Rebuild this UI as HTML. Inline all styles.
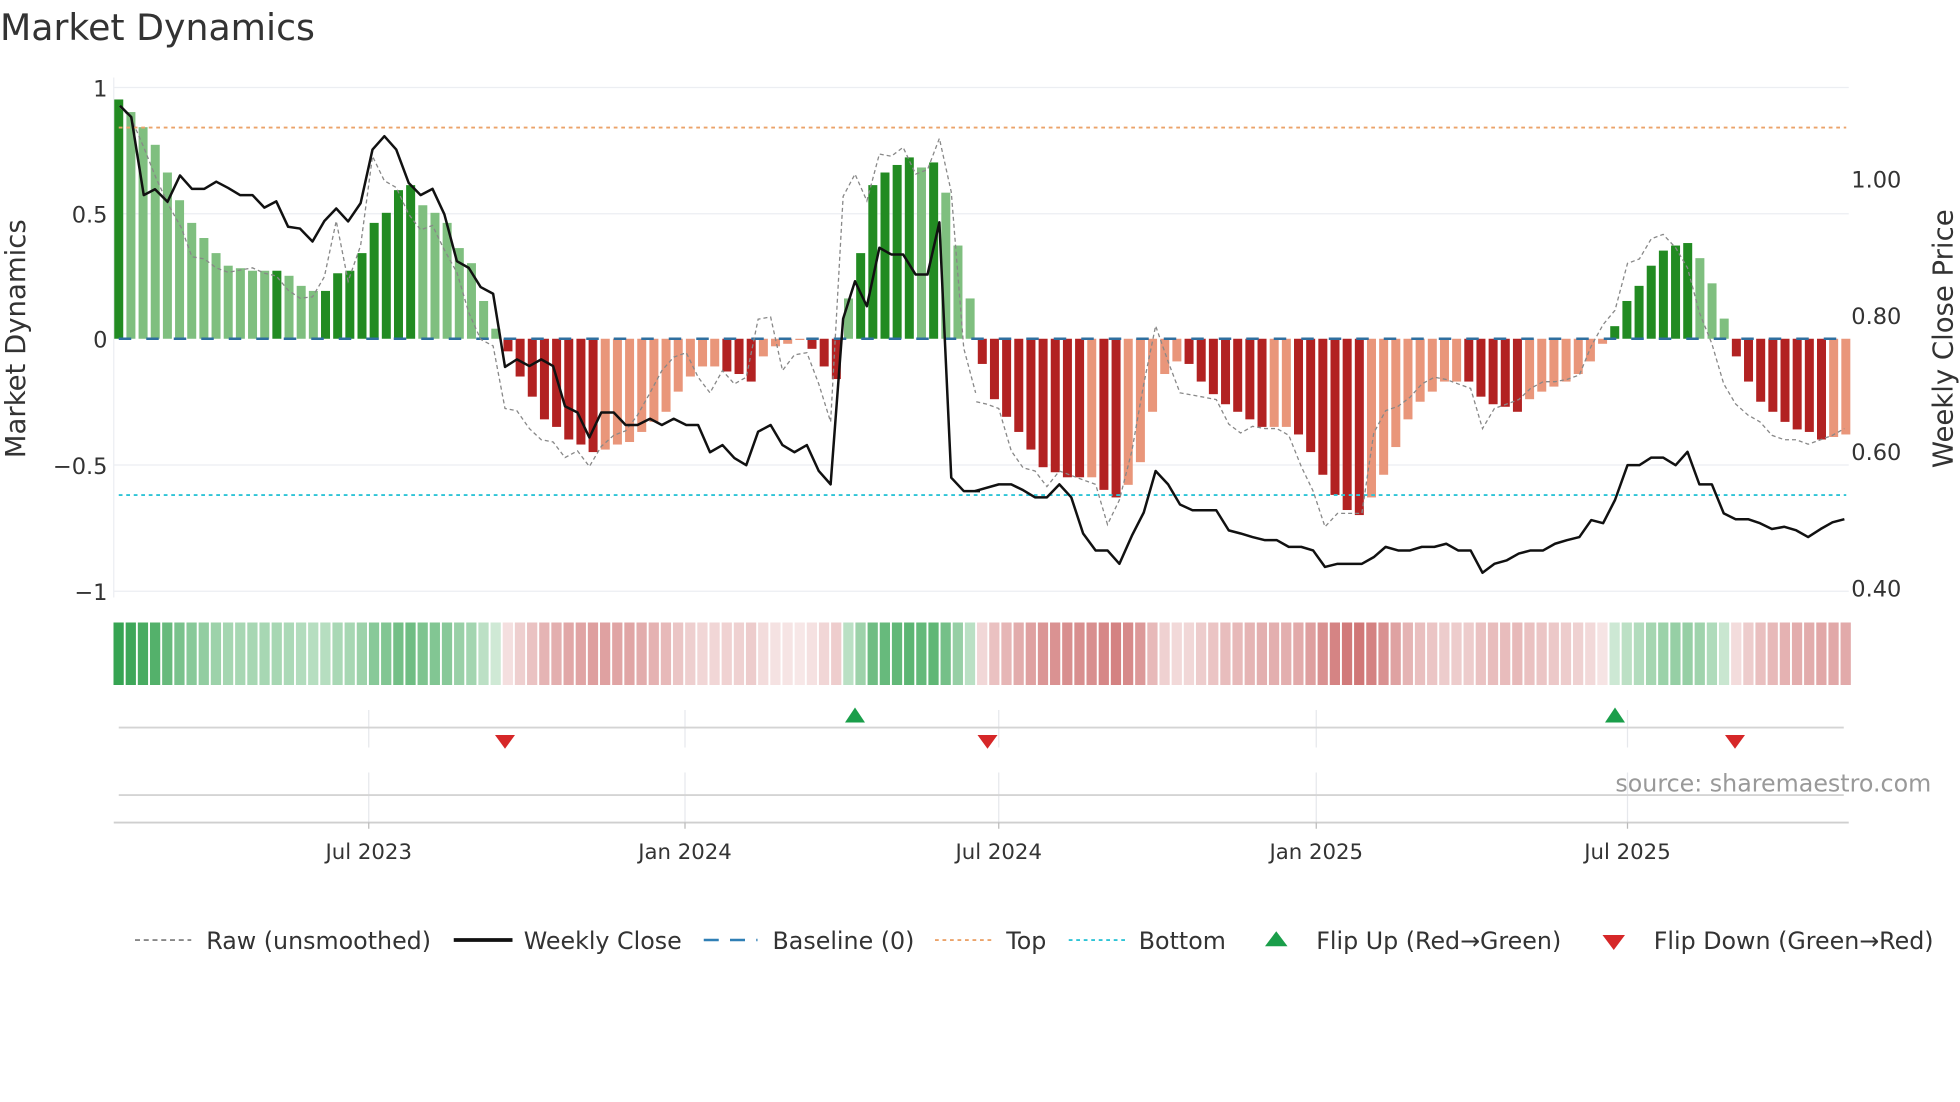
<!DOCTYPE html>
<html><head><meta charset="utf-8"><style>
html,body{margin:0;padding:0;background:#fff;width:1960px;height:1102px;overflow:hidden}
svg{display:block}
text{font-family:"DejaVu Sans","Liberation Sans",sans-serif;fill:#333}
</style></head><body>
<svg id="s" width="1960" height="1102" viewBox="0 0 1568 881.6" xmlns="http://www.w3.org/2000/svg">
<text x="0" y="32" font-size="29">Market Dynamics</text>
<g stroke="#eceef2" stroke-width="1">
<line x1="91" y1="70" x2="1479" y2="70"/><line x1="91" y1="171" x2="1479" y2="171"/>
<line x1="91" y1="372" x2="1479" y2="372"/><line x1="91" y1="473" x2="1479" y2="473"/>
<line x1="91" y1="62" x2="91" y2="478"/>
</g>
<g font-size="18" text-anchor="end">
<text x="86" y="77">1</text><text x="86" y="178">0.5</text><text x="86" y="278">0</text>
<text x="86" y="379">−0.5</text><text x="86" y="480">−1</text>
</g>
<g font-size="18">
<text x="1481" y="150">1.00</text><text x="1481" y="259">0.80</text>
<text x="1481" y="368">0.60</text><text x="1481" y="477">0.40</text>
</g>
<text font-size="22" transform="translate(20,271) rotate(-90)" text-anchor="middle">Market Dynamics</text>
<text font-size="22" transform="translate(1562,271) rotate(-90)" text-anchor="middle">Weekly Close Price</text>
<g id="bars"></g>
<g id="heat"></g>
<line x1="95" y1="102" x2="1477" y2="102" stroke="#eba36a" stroke-width="1.5" stroke-dasharray="3,3"/>
<line x1="95" y1="396" x2="1477" y2="396" stroke="#2ec4d6" stroke-width="1.5" stroke-dasharray="3,3"/>
<line x1="95" y1="271" x2="1477" y2="271" stroke="#2f6f9f" stroke-width="2" stroke-dasharray="10,12"/>
<g transform="scale(0.5,0.357143)">
<polyline fill="none" stroke="#888" stroke-width="1.3" stroke-dasharray="4,3" vector-effect="non-scaling-stroke" points="192,240 210,265 230,330 250,400 270,460 290,510 307,575 327,580 346,600 365,610 384,605 404,600 423,612 442,618 461,650 480,668 500,665 519,620 538,495 557,630 577,550 596,350 615,405 634,420 654,480 673,515 692,505 711,560 731,610 750,700 769,760 789,775 808,915 827,920 847,960 866,985 885,990 904,1025 924,1010 943,1045 962,1000 982,975 1001,965 1020,930 1040,880 1059,830 1078,800 1098,790 1117,845 1136,880 1156,830 1175,860 1194,845 1213,715 1233,710 1252,830 1271,795 1291,790 1310,860 1329,945 1349,440 1368,390 1387,450 1407,345 1426,350 1445,330 1465,390 1484,380 1503,310 1522,430 1542,780 1561,880"/>
<polyline fill="none" stroke="#111" stroke-width="2.5" vector-effect="non-scaling-stroke" stroke-linejoin="round" points="192,237 210,262 230,437 248,424 268,452 288,393 307,423 327,423 346,407 365,421 384,437 404,437 423,465 442,451 461,508 480,512 500,541 519,495 538,467 557,496 577,455 596,335 615,305 634,335 654,410 673,437 692,423 711,480 731,585 750,600 769,643 789,658 808,822 827,805 847,820 866,805 885,820 904,910 924,924 943,980 962,924 982,924 1001,952 1020,952 1040,938 1059,952 1078,938 1098,952 1117,952 1136,1013 1156,997 1175,1026 1194,1042 1213,967 1233,952 1252,997 1271,1013 1291,997 1310,1055 1329,1085 1349,714 1368,630 1387,686 1407,555 1426,570 1445,570 1465,615 1484,615 1503,498 1522,1070 1542,1100 1568,1100"/>
</g>
<g transform="translate(784,0) scale(0.5,0.357143)">
<polyline fill="none" stroke="#888" stroke-width="1.3" stroke-dasharray="4,3" vector-effect="non-scaling-stroke" points="-6,900 10,905 30,915 50,1010 69,1048 88,1055 107,1090 127,1055 146,1065 165,1075 185,1085 204,1175 223,1120 243,1010 262,860 281,730 301,810 320,880 340,885 359,890 378,895 398,950 417,970 436,955 456,960 475,960 494,975 514,1045 533,1100 552,1180 572,1150 591,1150 611,1150 630,970 649,920 669,910 688,890 707,860 727,845 746,850 765,860 785,870 804,960 823,915 843,905 862,895 881,870 901,855 920,855 939,850 959,840 978,775 997,727 1016,695 1036,590 1055,580 1074,535 1093,525 1113,555 1132,600 1151,700 1171,770 1190,860 1209,905 1229,930 1248,945 1267,975 1287,985 1306,985 1325,995 1345,985 1364,975 1383,960"/>
<polyline fill="none" stroke="#111" stroke-width="2.5" vector-effect="non-scaling-stroke" stroke-linejoin="round" points="-8,1100 30,1085 50,1085 69,1098 88,1114 107,1114 127,1085 146,1114 165,1195 185,1233 204,1233 223,1263 243,1200 262,1148 281,1055 301,1085 320,1130 340,1143 359,1143 378,1143 398,1188 417,1195 436,1203 456,1210 475,1210 494,1225 514,1225 533,1233 552,1270 572,1263 591,1263 611,1263 630,1248 649,1225 669,1233 688,1233 707,1225 727,1225 746,1218 765,1233 785,1233 804,1283 823,1263 843,1255 862,1240 881,1233 901,1233 920,1218 939,1210 959,1203 978,1165 997,1172 1016,1120 1036,1042 1055,1042 1074,1025 1093,1025 1113,1042 1132,1012 1151,1085 1171,1085 1190,1150 1209,1163 1229,1163 1248,1172 1267,1185 1287,1180 1306,1188 1325,1203 1345,1185 1364,1170 1383,1163"/>
</g>
<g stroke="#e6e8ec" stroke-width="1">
<line x1="295" y1="568" x2="295" y2="598"/><line x1="548" y1="568" x2="548" y2="598"/><line x1="799" y1="568" x2="799" y2="598"/><line x1="1053" y1="568" x2="1053" y2="598"/><line x1="1302" y1="568" x2="1302" y2="598"/>
<line x1="295" y1="618" x2="295" y2="658"/><line x1="548" y1="618" x2="548" y2="658"/><line x1="799" y1="618" x2="799" y2="658"/><line x1="1053" y1="618" x2="1053" y2="658"/><line x1="1302" y1="618" x2="1302" y2="658"/>
</g>
<line x1="95" y1="582" x2="1475" y2="582" stroke="#d4d4d4" stroke-width="1.5"/>
<line x1="95" y1="636" x2="1475" y2="636" stroke="#d4d4d4" stroke-width="1.5"/>
<line x1="91" y1="658" x2="1479" y2="658" stroke="#cfcfcf" stroke-width="1.5"/>
<g stroke="#bbb" stroke-width="1"><line x1="295" y1="658" x2="295" y2="663"/><line x1="548" y1="658" x2="548" y2="663"/><line x1="799" y1="658" x2="799" y2="663"/><line x1="1053" y1="658" x2="1053" y2="663"/><line x1="1302" y1="658" x2="1302" y2="663"/></g>
<g fill="#1a9e4a"><polygon points="684,566 676,578 692,578"/><polygon points="1292,566 1284,578 1300,578"/></g>
<g fill="#d62728"><polygon points="396,588 412,588 404,599"/><polygon points="782,588 798,588 790,599"/><polygon points="1380,588 1396,588 1388,599"/></g>
<text x="1545" y="633" font-size="19" text-anchor="end" style="fill:#999">source: sharemaestro.com</text>
<g font-size="17" text-anchor="middle">
<text x="295" y="687">Jul 2023</text><text x="548" y="687">Jan 2024</text><text x="799" y="687">Jul 2024</text><text x="1053" y="687">Jan 2025</text><text x="1302" y="687">Jul 2025</text>
</g>
<line x1="108" y1="752" x2="153" y2="752" stroke="#888" stroke-width="1.5" stroke-dasharray="4,3"/>
<line x1="363" y1="752" x2="410" y2="752" stroke="#111" stroke-width="3"/>
<line x1="563" y1="752" x2="606" y2="752" stroke="#2f7fb5" stroke-width="2" stroke-dasharray="12,9"/>
<line x1="748" y1="752" x2="793" y2="752" stroke="#eba36a" stroke-width="1.5" stroke-dasharray="3,3"/>
<line x1="855" y1="752" x2="900" y2="752" stroke="#2ec4d6" stroke-width="1.5" stroke-dasharray="3,3"/>
<polygon points="1021,745 1012,757 1030,757" fill="#1a9e4a"/>
<polygon points="1282,748 1300,748 1291,760" fill="#d62728"/>
<g font-size="19">
<text x="165" y="759">Raw (unsmoothed)</text><text x="419" y="759">Weekly Close</text><text x="618" y="759">Baseline (0)</text>
<text x="805" y="759">Top</text><text x="911" y="759">Bottom</text><text x="1053" y="759">Flip Up (Red→Green)</text><text x="1323" y="759">Flip Down (Green→Red)</text>
</g>
</svg>
<script>
var v=[
[.95,1],[.90,0],[.84,0],[.77,0],[.66,0],[.55,0],[.46,0],[.40,0],[.34,0],[.29,0],[.28,0],[.27,0],[.27,0],[.27,1],[.25,0],[.21,0],[.19,0],[.19,1],[.26,1],[.27,1],[.34,1],[.46,1],[.50,1],[.59,1],[.61,1],[.53,0],[.50,0],[.46,0],[.36,0],[.30,0],[.15,0],[.04,0],
[-.05,1],[-.15,1],[-.23,1],[-.32,1],[-.35,1],[-.40,1],[-.42,1],[-.45,1],[-.44,0],[-.42,0],[-.41,0],[-.37,0],[-.33,0],[-.29,0],[-.21,0],[-.15,0],[-.11,0],[-.11,0],[-.13,1],[-.14,1],[-.17,1],[-.07,0],[-.03,0],[-.02,0],[-.005,0],[-.04,1],[-.11,1],[-.16,1],
[.16,0],[.34,1],[.61,1],[.66,1],[.69,1],[.72,1],[.68,0],[.70,1],[.58,0],[.37,0],[.16,0],
[-.10,1],[-.24,1],[-.31,1],[-.37,1],[-.44,1],[-.51,1],[-.53,1],[-.55,1],[-.55,1],[-.55,0],[-.60,1],[-.63,1],[-.58,0],[-.49,0],[-.29,0],[-.14,0],[-.09,0],[-.10,1],[-.17,1],[-.22,1],[-.26,1],[-.29,1],[-.32,1],[-.35,1],[-.35,0],[-.35,0],[-.38,1],[-.45,1],[-.54,1],[-.62,1],[-.68,1],[-.70,1],[-.63,0],[-.54,0],[-.43,0],[-.32,0],[-.25,0],[-.21,0],[-.17,0],[-.17,0],[-.17,1],[-.23,1],[-.26,1],[-.27,1],[-.29,1],[-.24,0],[-.21,0],[-.19,0],[-.17,0],[-.14,0],[-.09,0],[-.02,0],
[.05,1],[.15,1],[.21,1],[.29,1],[.35,1],[.37,1],[.38,1],[.32,0],[.22,0],[.08,0],
[-.07,1],[-.17,1],[-.25,1],[-.29,1],[-.33,1],[-.36,1],[-.37,1],[-.40,1],[-.39,0],[-.38,0]];
var b='',h='';
for(var i=0;i<v.length;i++){var x=95+i*9.73,val=v[i][0],d=v[i][1],y0=271,hh=Math.abs(val)*201.5;
var c=val>=0?(d?'#228b22':'#7fbf7f'):(d?'#b22222':'#e9967a');
var y=val>=0?y0-hh:y0;
b+='<rect x="'+(x-3.6).toFixed(2)+'" y="'+y.toFixed(2)+'" width="7.2" height="'+hh.toFixed(2)+'" fill="'+c+'"/>';
var a,hc;if(val>=0){a=0.2+0.8*Math.min(1,Math.abs(val));hc='46,160,75';}else{a=0.15+0.75*Math.min(1,Math.abs(val)/0.75);hc='200,95,95';}
h+='<rect x="'+(x-4.2).toFixed(2)+'" y="498" width="8.2" height="50" fill="rgba('+hc+','+a.toFixed(2)+')"/>';}
document.getElementById('bars').innerHTML=b;document.getElementById('heat').innerHTML=h;
</script>
</body></html>
